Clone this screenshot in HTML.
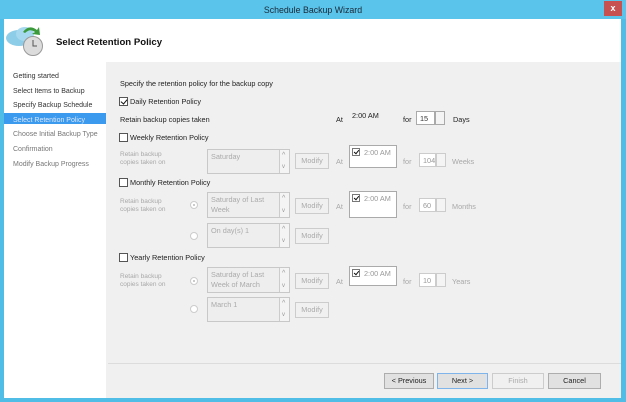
<!DOCTYPE html>
<html><head><style>
*{margin:0;padding:0;box-sizing:border-box}
body{width:626px;height:402px;position:relative;overflow:hidden;background:#4fbde6;font-family:"Liberation Sans",sans-serif;font-size:7.3px;color:#222}
.a{position:absolute}
.g{color:#a8a8a8}
.cb{position:absolute;width:9px;height:9px;border:1px solid #555;background:#fff}
.cb.k::after{content:"";position:absolute;left:2px;top:0px;width:3px;height:5px;border:solid #111;border-width:0 1.5px 1.5px 0;transform:rotate(40deg)}
.lb{position:absolute;border:1px solid #c8c8c8;background:#eee;color:#aaa;padding:2px 3px;line-height:10px}
.sp{position:absolute;right:0;top:0;bottom:0;width:10px;border-left:1px solid #ccc;background:#f4f4f4}
.sp::before{content:"^";position:absolute;left:2px;top:1px;font-size:7px;color:#999}
.sp::after{content:"v";position:absolute;left:2px;bottom:1px;font-size:6px;color:#999}
.btn{position:absolute;border:1px solid #ccc;background:#f0f0f0;color:#aaa;text-align:center;line-height:14px}
.tb{position:absolute;border:1px solid #aaa;background:#fff;color:#999;padding:2px 0 0 14px;line-height:9px}
.tb i{position:absolute;left:2px;top:2px;width:8px;height:8px;border:1px solid #777}
.tb i::after{content:"";position:absolute;left:2px;top:0;width:2px;height:4px;border:solid #111;border-width:0 1.5px 1.5px 0;transform:rotate(40deg)}
.nb{position:absolute;border:1px solid #ccc;background:#fff;color:#999;padding:2px 0 0 3px;line-height:10px}
.nb b{position:absolute;right:-11px;top:-1px;width:10px;height:calc(100% + 2px);border:1px solid #ccc;background:#f4f4f4}
.rd{position:absolute;width:8px;height:8px;border:1px solid #ccc;border-radius:50%;background:#fff}
.rd.on::after{content:"";position:absolute;left:2px;top:2px;width:2px;height:2px;border-radius:50%;background:#bbb}
.fb{position:absolute;height:16px;border:1px solid #adadad;background:#e1e1e1;text-align:center;line-height:14px;font-size:7.3px}
</style></head><body>
<div class="a" style="left:0;top:0;width:626px;height:19px;background:#5ac4ea"></div>
<div class="a" style="left:0;top:5px;width:626px;text-align:center;font-size:8.8px;color:#1a2a3a">Schedule Backup Wizard</div>
<div class="a" style="left:604px;top:1px;width:18px;height:15px;background:#c75050;color:#fff;text-align:center;font-size:9px;font-weight:bold;line-height:15px">x</div>
<div class="a" style="left:4px;top:19px;width:617px;height:379px;background:#f0f0f0"></div>
<div class="a" style="left:4px;top:19px;width:617px;height:43px;background:#fff"></div>
<svg class="a" style="left:3px;top:24px" width="42" height="34"><ellipse cx="16" cy="14" rx="13" ry="8" fill="#8ecde8"/><ellipse cx="22" cy="10" rx="9" ry="7" fill="#a6d9ef"/><circle cx="30" cy="22" r="9.5" fill="#dcdcdc" stroke="#999"/><path d="M30 16v6h4" stroke="#555" fill="none"/><path d="M20 8q6-8 14-2l2-3 1 8-8-1 3-2q-5-4-10 1z" fill="#3b9a3b"/></svg>
<div class="a" style="left:56px;top:37px;font-size:9.6px;font-weight:bold;color:#111">Select Retention Policy</div>
<div class="a" style="left:4px;top:62px;width:102px;height:336px;background:#fff"></div>
<div class="a" style="left:4px;top:113px;width:102px;height:11px;background:#3b99ee"></div>
<div class="a" style="left:13px;top:70px;line-height:14.6px;font-size:7px;color:#333">Getting started<br>Select Items to Backup<br>Specify Backup Schedule<br><span style="color:#dbe9fb">Select Retention Policy</span><br><span style="color:#777">Choose Initial Backup Type<br>Confirmation<br>Modify Backup Progress</span></div>

<div class="a" style="left:120px;top:79px">Specify the retention policy for the backup copy</div>
<div class="cb k" style="left:119px;top:97px"></div><div class="a" style="left:130px;top:97px">Daily Retention Policy</div>
<div class="a" style="left:120px;top:115px">Retain backup copies taken</div>
<div class="a" style="left:336px;top:115px">At</div><div class="a" style="left:352px;top:111px">2:00 AM</div>
<div class="a" style="left:403px;top:115px">for</div>
<div class="nb" style="left:416px;top:111px;width:19px;height:14px;color:#333;border-color:#aaa">15<b style="border-color:#aaa"></b></div>
<div class="a" style="left:453px;top:115px">Days</div>

<div class="cb" style="left:119px;top:133px"></div><div class="a" style="left:130px;top:133px">Weekly Retention Policy</div>
<div class="a g" style="left:120px;top:151px;line-height:8px;font-size:6.5px">Retain backup<br>copies taken on</div>
<div class="lb" style="left:207px;top:149px;width:83px;height:25px">Saturday<div class="sp"></div></div>
<div class="btn" style="left:295px;top:153px;width:34px;height:16px">Modify</div>
<div class="a g" style="left:336px;top:157px">At</div>
<div class="tb" style="left:349px;top:145px;width:48px;height:23px"><i></i>2:00 AM</div>
<div class="a g" style="left:403px;top:157px">for</div>
<div class="nb" style="left:419px;top:153px;width:17px;height:14px">104<b></b></div>
<div class="a g" style="left:452px;top:157px">Weeks</div>

<div class="cb" style="left:119px;top:178px"></div><div class="a" style="left:130px;top:178px">Monthly Retention Policy</div>
<div class="a g" style="left:120px;top:198px;line-height:8px;font-size:6.5px">Retain backup<br>copies taken on</div>
<div class="rd on" style="left:190px;top:201px"></div>
<div class="lb" style="left:207px;top:192px;width:83px;height:26px">Saturday of Last<br>Week<div class="sp"></div></div>
<div class="btn" style="left:295px;top:198px;width:34px;height:16px">Modify</div>
<div class="a g" style="left:336px;top:202px">At</div>
<div class="tb" style="left:349px;top:191px;width:48px;height:27px"><i></i>2:00 AM</div>
<div class="a g" style="left:403px;top:202px">for</div>
<div class="nb" style="left:419px;top:198px;width:17px;height:14px">60<b></b></div>
<div class="a g" style="left:452px;top:202px">Months</div>
<div class="rd" style="left:190px;top:232px"></div>
<div class="lb" style="left:207px;top:223px;width:83px;height:25px">On day(s) 1<div class="sp"></div></div>
<div class="btn" style="left:295px;top:228px;width:34px;height:16px">Modify</div>

<div class="cb" style="left:119px;top:253px"></div><div class="a" style="left:130px;top:253px">Yearly Retention Policy</div>
<div class="a g" style="left:120px;top:273px;line-height:8px;font-size:6.5px">Retain backup<br>copies taken on</div>
<div class="rd on" style="left:190px;top:277px"></div>
<div class="lb" style="left:207px;top:267px;width:83px;height:26px">Saturday of Last<br>Week of March<div class="sp"></div></div>
<div class="btn" style="left:295px;top:273px;width:34px;height:16px">Modify</div>
<div class="a g" style="left:336px;top:277px">At</div>
<div class="tb" style="left:349px;top:266px;width:48px;height:20px"><i></i>2:00 AM</div>
<div class="a g" style="left:403px;top:277px">for</div>
<div class="nb" style="left:419px;top:273px;width:17px;height:14px">10<b></b></div>
<div class="a g" style="left:452px;top:277px">Years</div>
<div class="rd" style="left:190px;top:305px"></div>
<div class="lb" style="left:207px;top:297px;width:83px;height:25px">March 1<div class="sp"></div></div>
<div class="btn" style="left:295px;top:302px;width:34px;height:16px">Modify</div>

<div class="a" style="left:108px;top:363px;width:513px;height:1px;background:#dcdcdc"></div>
<div class="fb" style="left:384px;top:373px;width:50px">&lt; Previous</div>
<div class="fb" style="left:437px;top:373px;width:51px;border-color:#7eb4ea">Next &gt;</div>
<div class="fb" style="left:492px;top:373px;width:52px;color:#aaa;border-color:#ccc;background:#f0f0f0">Finish</div>
<div class="fb" style="left:548px;top:373px;width:53px">Cancel</div>
</body></html>
